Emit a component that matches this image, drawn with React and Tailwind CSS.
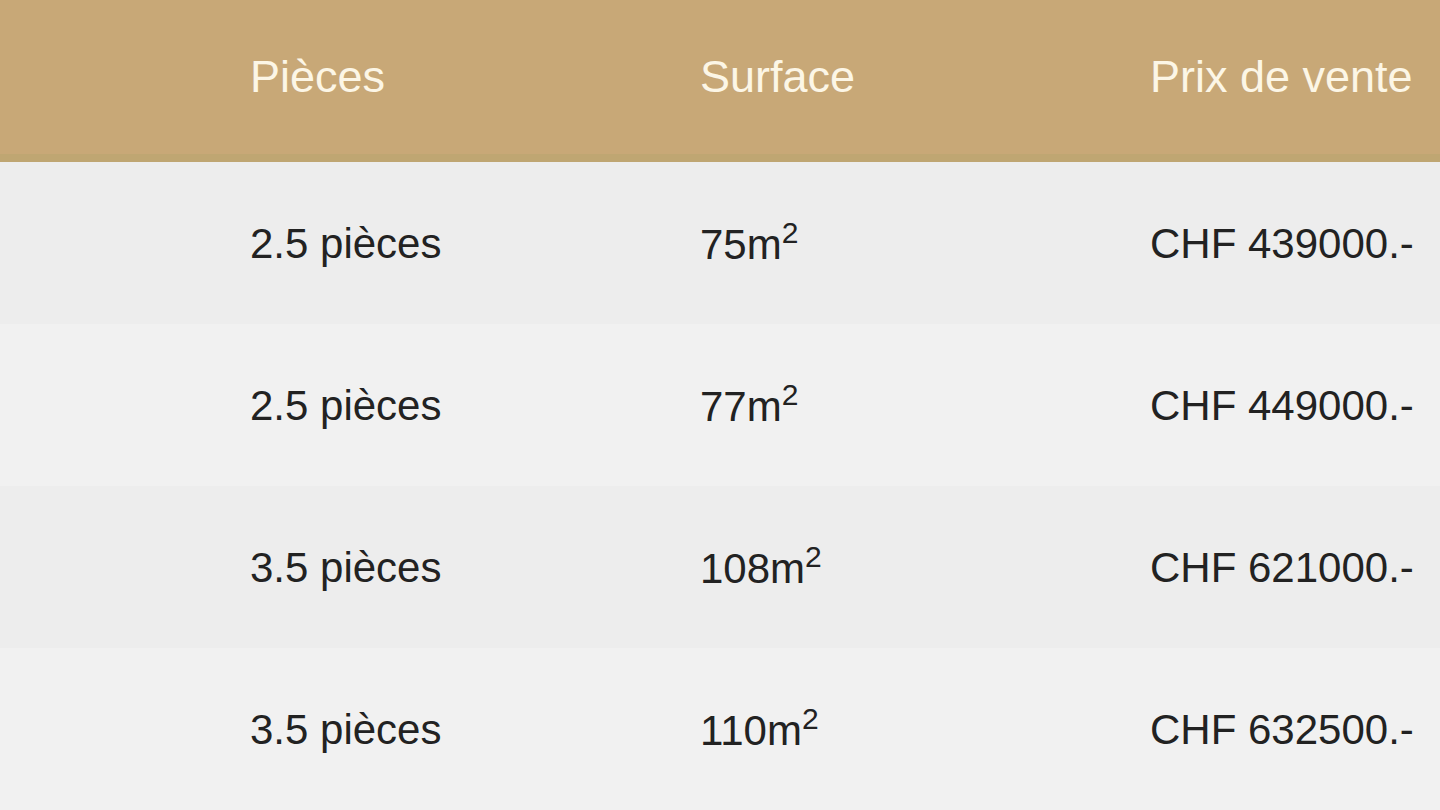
import React from "react";

const rows = [
  { p: "2.5 pièces", s: "75", price: "CHF 439000.-", bg: "bg-[#ededed]" },
  { p: "2.5 pièces", s: "77", price: "CHF 449000.-", bg: "bg-[#f1f1f1]" },
  { p: "3.5 pièces", s: "108", price: "CHF 621000.-", bg: "bg-[#ededed]" },
  { p: "3.5 pièces", s: "110", price: "CHF 632500.-", bg: "bg-[#f1f1f1]" },
];

export default function App() {
  return (
    <div
      className="w-[1440px] h-[810px] overflow-hidden flex flex-col"
      style={{ fontFamily: '"Liberation Sans", Arial, sans-serif' }}
    >
      <div className="h-[162px] shrink-0 bg-[#c8a877] border-b-[8px] border-[#bfa672] grid grid-cols-[450px_450px_1fr] pl-[250px] items-center text-[45px] text-[#fcf6e6]">
        <div>Pièces</div>
        <div>Surface</div>
        <div className="whitespace-nowrap">Prix de vente</div>
      </div>
      {rows.map((r, i) => (
        <div
          key={i}
          className={`h-[162px] shrink-0 ${r.bg} grid grid-cols-[450px_450px_1fr] pl-[250px] items-center text-[42px] text-[#222222]`}
        >
          <div>{r.p}</div>
          <div>
            {r.s}m<span className="text-[30px] align-[16px]">2</span>
          </div>
          <div className="whitespace-nowrap">{r.price}</div>
        </div>
      ))}
    </div>
  );
}
